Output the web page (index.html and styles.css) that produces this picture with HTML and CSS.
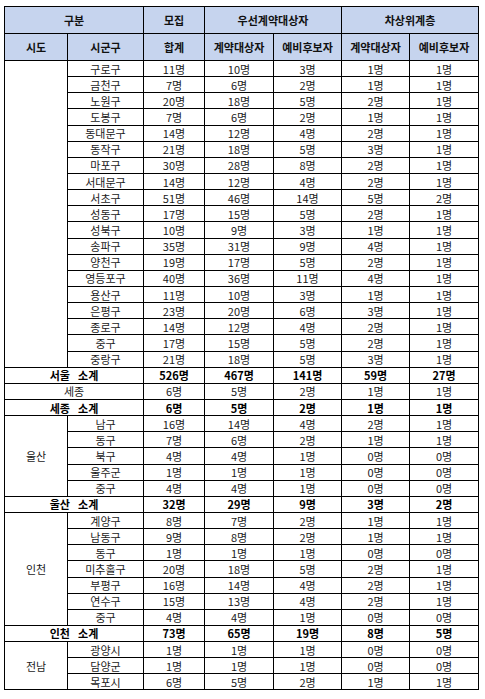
FILE: index.html
```html
<!DOCTYPE html>
<html lang="ko">
<head>
<meta charset="utf-8">
<link rel="stylesheet" href="styles.css">
</head>
<body>
<table class="tbl">
<colgroup>
<col class="c1"><col class="c2"><col class="c3"><col class="c4"><col class="c5"><col class="c6"><col class="c7">
</colgroup>
<thead>
<tr class="h"><th colspan="2">구분</th><th>모집</th><th colspan="2">우선계약대상자</th><th colspan="2">차상위계층</th></tr>
<tr class="h"><th>시도</th><th>시군구</th><th>합계</th><th>계약대상자</th><th>예비후보자</th><th>계약대상자</th><th>예비후보자</th></tr>
</thead>
<tbody>
<tr><td rowspan="19"></td><td>구로구</td><td>11명</td><td>10명</td><td>3명</td><td>1명</td><td>1명</td></tr>
<tr><td>금천구</td><td>7명</td><td>6명</td><td>2명</td><td>1명</td><td>1명</td></tr>
<tr><td>노원구</td><td>20명</td><td>18명</td><td>5명</td><td>2명</td><td>1명</td></tr>
<tr><td>도봉구</td><td>7명</td><td>6명</td><td>2명</td><td>1명</td><td>1명</td></tr>
<tr><td>동대문구</td><td>14명</td><td>12명</td><td>4명</td><td>2명</td><td>1명</td></tr>
<tr><td>동작구</td><td>21명</td><td>18명</td><td>5명</td><td>3명</td><td>1명</td></tr>
<tr><td>마포구</td><td>30명</td><td>28명</td><td>8명</td><td>2명</td><td>1명</td></tr>
<tr><td>서대문구</td><td>14명</td><td>12명</td><td>4명</td><td>2명</td><td>1명</td></tr>
<tr><td>서초구</td><td>51명</td><td>46명</td><td>14명</td><td>5명</td><td>2명</td></tr>
<tr><td>성동구</td><td>17명</td><td>15명</td><td>5명</td><td>2명</td><td>1명</td></tr>
<tr><td>성북구</td><td>10명</td><td>9명</td><td>3명</td><td>1명</td><td>1명</td></tr>
<tr><td>송파구</td><td>35명</td><td>31명</td><td>9명</td><td>4명</td><td>1명</td></tr>
<tr><td>양천구</td><td>19명</td><td>17명</td><td>5명</td><td>2명</td><td>1명</td></tr>
<tr><td>영등포구</td><td>40명</td><td>36명</td><td>11명</td><td>4명</td><td>1명</td></tr>
<tr><td>용산구</td><td>11명</td><td>10명</td><td>3명</td><td>1명</td><td>1명</td></tr>
<tr><td>은평구</td><td>23명</td><td>20명</td><td>6명</td><td>3명</td><td>1명</td></tr>
<tr><td>종로구</td><td>14명</td><td>12명</td><td>4명</td><td>2명</td><td>1명</td></tr>
<tr><td>중구</td><td>17명</td><td>15명</td><td>5명</td><td>2명</td><td>1명</td></tr>
<tr><td>중랑구</td><td>21명</td><td>18명</td><td>5명</td><td>3명</td><td>1명</td></tr>
<tr class="sum"><td colspan="2" class="lbl">서울 소계</td><td>526명</td><td>467명</td><td>141명</td><td>59명</td><td>27명</td></tr>
<tr><td colspan="2">세종</td><td>6명</td><td>5명</td><td>2명</td><td>1명</td><td>1명</td></tr>
<tr class="sum"><td colspan="2" class="lbl">세종 소계</td><td>6명</td><td>5명</td><td>2명</td><td>1명</td><td>1명</td></tr>
<tr><td rowspan="5">울산</td><td>남구</td><td>16명</td><td>14명</td><td>4명</td><td>2명</td><td>1명</td></tr>
<tr><td>동구</td><td>7명</td><td>6명</td><td>2명</td><td>1명</td><td>1명</td></tr>
<tr><td>북구</td><td>4명</td><td>4명</td><td>1명</td><td>0명</td><td>0명</td></tr>
<tr><td>울주군</td><td>1명</td><td>1명</td><td>1명</td><td>0명</td><td>0명</td></tr>
<tr><td>중구</td><td>4명</td><td>4명</td><td>1명</td><td>0명</td><td>0명</td></tr>
<tr class="sum"><td colspan="2" class="lbl">울산 소계</td><td>32명</td><td>29명</td><td>9명</td><td>3명</td><td>2명</td></tr>
<tr><td rowspan="7">인천</td><td>계양구</td><td>8명</td><td>7명</td><td>2명</td><td>1명</td><td>1명</td></tr>
<tr><td>남동구</td><td>9명</td><td>8명</td><td>2명</td><td>1명</td><td>1명</td></tr>
<tr><td>동구</td><td>1명</td><td>1명</td><td>1명</td><td>0명</td><td>0명</td></tr>
<tr><td>미추홀구</td><td>20명</td><td>18명</td><td>5명</td><td>2명</td><td>1명</td></tr>
<tr><td>부평구</td><td>16명</td><td>14명</td><td>4명</td><td>2명</td><td>1명</td></tr>
<tr><td>연수구</td><td>15명</td><td>13명</td><td>4명</td><td>2명</td><td>1명</td></tr>
<tr><td>중구</td><td>4명</td><td>4명</td><td>1명</td><td>0명</td><td>0명</td></tr>
<tr class="sum"><td colspan="2" class="lbl">인천 소계</td><td>73명</td><td>65명</td><td>19명</td><td>8명</td><td>5명</td></tr>
<tr><td rowspan="3">전남</td><td>광양시</td><td>1명</td><td>1명</td><td>1명</td><td>0명</td><td>0명</td></tr>
<tr><td>담양군</td><td>1명</td><td>1명</td><td>1명</td><td>0명</td><td>0명</td></tr>
<tr><td>목포시</td><td>6명</td><td>5명</td><td>2명</td><td>1명</td><td>1명</td></tr>
</tbody>
</table>
</body>
</html>
```
FILE: styles.css
```css
html, body {
  margin: 0;
  padding: 0;
  background: #ffffff;
}
body {
  padding: 6px 0 0 4px;
  font-family: "Noto Sans CJK KR", "Noto Sans", sans-serif;
  font-size: 11px;
  color: #1a1a1a;
}
.tbl {
  border-collapse: collapse;
  table-layout: fixed;
  width: 475px;
}
.c1 { width: 63px; }
.c2 { width: 76px; }
.c3 { width: 61px; }
.c4 { width: 69px; }
.c5 { width: 68px; }
.c6 { width: 68px; }
.c7 { width: 69px; }
.tbl th,
.tbl td {
  border: 1px solid #000;
  padding: 0;
  text-align: center;
  vertical-align: middle;
  line-height: 14px;
  white-space: nowrap;
}
.tbl th {
  background: #c6d4ee;
  font-weight: 700;
  height: 26px;
  color: #111;
}
.tbl tbody td {
  height: 15.15px;
}
.sum td {
  font-weight: 700;
  color: #000;
}
.lbl {
  word-spacing: 5px;
}
```
